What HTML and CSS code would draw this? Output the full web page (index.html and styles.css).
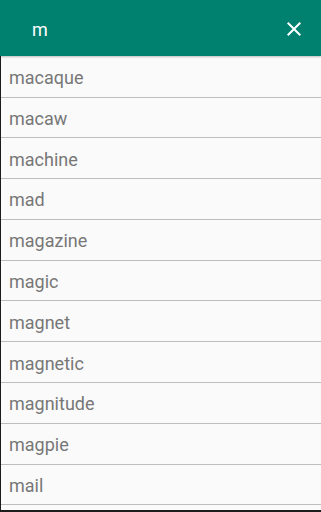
FILE: index.html
```html
<!DOCTYPE html>
<html>
<head>
<meta charset="utf-8">
<link rel="stylesheet" href="styles.css">
</head>
<body>
<div class="app">
  <header class="bar">
    <span class="query">m</span>
    <svg class="close" viewBox="0 0 24 24" width="24" height="24"><path fill="#fff" d="M19 6.41L17.59 5 12 10.59 6.41 5 5 6.41 10.59 12 5 17.59 6.41 19 12 13.41 17.59 19 19 17.59 13.41 12z"/></svg>
  </header>
  <ul class="list">
    <li class="item">macaque</li>
    <li class="item">macaw</li>
    <li class="item">machine</li>
    <li class="item">mad</li>
    <li class="item">magazine</li>
    <li class="item">magic</li>
    <li class="item">magnet</li>
    <li class="item">magnetic</li>
    <li class="item">magnitude</li>
    <li class="item">magpie</li>
    <li class="item">mail</li>
  </ul>
</div>
</body>
</html>
```
FILE: styles.css
```css
html, body {
  margin: 0;
  padding: 0;
  background: #fafafa;
}
.app {
  width: 321px;
  height: 512px;
  overflow: hidden;
  display: flex;
  flex-direction: column;
  font-family: Roboto, "Noto Sans", sans-serif;
  position: relative;
  box-sizing: border-box;
  border-bottom: 2px solid #1c1c1c;
}
.bar {
  height: 56px;
  flex: none;
  background: #00806f;
  display: flex;
  align-items: center;
  padding: 0 15px 0 32px;
  box-shadow: 0 1px 2px rgba(0,0,0,0.25);
  position: relative;
  z-index: 1;
}
.query {
  flex: 1;
  color: #fff;
  font-size: 18px;
  padding-top: 3px;
}
.close {
  display: block;
  margin-top: 1px;
}
.list {
  list-style: none;
  margin: 0;
  padding: 0;
  flex: 1;
  border-left: 1px solid #1c1c1c;
  background: #fafafa;
}
.item {
  height: 40.8px;
  box-sizing: border-box;
  border-bottom: 1.5px solid #bdbdbd;
  display: flex;
  align-items: center;
  padding-left: 8px;
  padding-top: 2px;
  color: #777;
  font-size: 18px;
}
.item:first-child {
  height: 41.5px;
}
```
